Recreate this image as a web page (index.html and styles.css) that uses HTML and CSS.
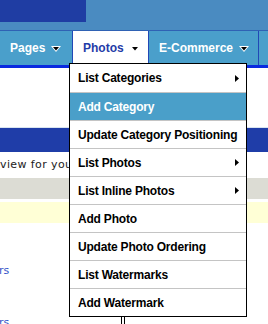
FILE: index.html
```html
<!DOCTYPE html>
<html lang="en">
<head>
  <meta charset="UTF-8" />
  <title>Photos Admin</title>
  <link rel="stylesheet" href="styles.css">
</head>
<body>

<div class="header">
  <div class="logo"></div>
</div>

<ul class="nav">
  <li class="tab">Pages
    <svg class="down" width="10" height="6" viewBox="0 0 10 6"><polygon points="0,0 10,0 5,6" fill="#fff"/><polygon points="2,1 8,1 5,4.5" fill="#000"/></svg>
  </li>
  <li class="tab active">Photos
    <svg class="down" width="10" height="6" viewBox="0 0 10 6"><polygon points="0,0 10,0 5,6" fill="#fff"/><polygon points="2,1 8,1 5,4.5" fill="#000"/></svg>
    <ul class="dropdown">
      <li class="item">List Categories <svg class="right" width="4" height="7" viewBox="0 0 4 7"><polygon points="0,0 4,3.5 0,7" fill="#000"/></svg></li>
      <li class="item hover">Add Category</li>
      <li class="item">Update Category Positioning</li>
      <li class="item">List Photos <svg class="right" width="4" height="7" viewBox="0 0 4 7"><polygon points="0,0 4,3.5 0,7" fill="#000"/></svg></li>
      <li class="item">List Inline Photos <svg class="right" width="4" height="7" viewBox="0 0 4 7"><polygon points="0,0 4,3.5 0,7" fill="#000"/></svg></li>
      <li class="item">Add Photo</li>
      <li class="item">Update Photo Ordering</li>
      <li class="item">List Watermarks</li>
      <li class="item">Add Watermark</li>
    </ul>
  </li>
  <li class="tab wide">E-Commerce
    <svg class="down" width="10" height="6" viewBox="0 0 10 6"><polygon points="0,0 10,0 5,6" fill="#fff"/><polygon points="2,1 8,1 5,4.5" fill="#000"/></svg>
  </li>
  <li class="rest"></li>
</ul>

<div class="content">
  <div class="titlebar"></div>
  <p class="intro">view for your</p>
  <div class="row gray"></div>
  <div class="row yellow"></div>
  <a class="link first">rs</a>
  <a class="link">rs</a>
  <div class="rule"></div>
</div>

</body>
</html>
```

FILE: styles.css
```css
body {
  margin: 0;
  width: 268px;
  height: 324px;
  overflow: hidden;
  font-family: 'Liberation Sans', Arial, sans-serif;
  background: #fff;
}

.header {
  height: 30px;
  background: #4a8bc1;
}

.logo {
  width: 86px;
  height: 22px;
  background: #1f3da3;
}

.nav {
  list-style: none;
  margin: 0;
  padding: 0;
  display: flex;
  height: 34px;
  border-top: 1px solid #2f62b4;
  border-bottom: 3px solid #0a2ae0;
  background: #4a9fcb;
}

.tab {
  position: relative;
  display: flex;
  align-items: center;
  width: 62px;
  padding-left: 10px;
  border-right: 1px solid #2148b6;
  font-size: 12px;
  font-weight: bold;
  color: #fff;
}

.tab.active {
  width: 65px;
  background: #fff;
  color: #1f3ca8;
}

.tab.wide {
  width: 99px;
}

.rest {
  flex: 1;
}

.down {
  margin-left: 6px;
  margin-top: 1px;
}

.dropdown {
  position: absolute;
  top: 32px;
  left: -4px;
  width: 176px;
  margin: 0;
  padding: 0;
  list-style: none;
  background: #fff;
  border: 1px solid #000;
  z-index: 2;
}

.item {
  display: flex;
  align-items: center;
  justify-content: space-between;
  height: 27px;
  padding: 0 7px 0 8px;
  border-top: 1px solid #c4c4c4;
  font-size: 12px;
  font-weight: bold;
  color: #000;
  white-space: nowrap;
  letter-spacing: -0.2px;
}

.item:first-child {
  border-top: none;
  height: 28px;
}

.item.hover {
  background: #4a9fc9;
  color: #fff;
}

.content {
  padding-top: 59px;
}

.titlebar {
  height: 24px;
  border-top: 1px solid #d8e4f0;
  background: #1f3da8;
}

.intro {
  margin: 6px 0 0;
  height: 20px;
  font-family: 'DejaVu Sans', Verdana, sans-serif;
  font-size: 11px;
  letter-spacing: 0.4px;
  color: #222;
  line-height: 14px;
}

.row {
  height: 21px;
}

.gray {
  background: #dcdcd4;
}

.yellow {
  margin-top: 3px;
  background: #ffffd6;
}

.link {
  display: block;
  margin-top: 39px;
  font-family: 'DejaVu Sans', Verdana, sans-serif;
  font-size: 11px;
  color: #3555c8;
  margin-left: -1px;
}

.link.first {
  margin-top: 41px;
}

.rule {
  position: absolute;
  left: 121px;
  top: 317px;
  width: 2px;
  height: 8px;
  border-left: 1px solid #000;
  border-right: 1px solid #000;
}
```
